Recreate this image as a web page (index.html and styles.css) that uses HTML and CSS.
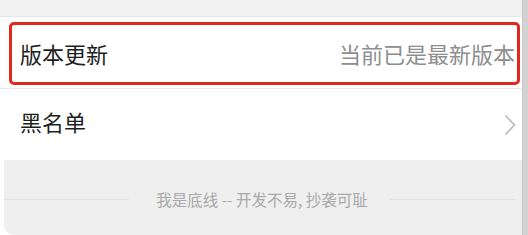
FILE: index.html
```html
<!DOCTYPE html>
<html lang="zh-CN">
<head>
<meta charset="utf-8">
<link rel="stylesheet" href="styles.css">
</head>
<body>
<div class="page">
  <div class="main">
    <div class="top-band"></div>
    <div class="row row-first">
      <div class="highlight">
        <span class="title">版本更新</span>
        <span class="value">当前已是最新版本</span>
      </div>
    </div>
    <div class="row row-second">
      <span class="title">黑名单</span>
      <svg class="chevron" width="12" height="22" viewBox="0 0 12 22"><path d="M1.5 1.5 L10.5 11 L1.5 20.5" fill="none" stroke="#b8b8b8" stroke-width="1.6"/></svg>
    </div>
    <div class="footer">
      <span class="line line-left"></span>
      <span class="footer-text">我是底线 -- 开发不易, 抄袭可耻</span>
      <span class="line line-right"></span>
    </div>
  </div>
  <div class="scrollbar"></div>
</div>
</body>
</html>
```
FILE: styles.css
```css
html, body {
  margin: 0;
  padding: 0;
  background: #ffffff;
}
body {
  font-family: "Noto Sans CJK SC", "Noto Sans", sans-serif;
  width: 528px;
  height: 235px;
  overflow: hidden;
}
.page {
  display: flex;
  width: 528px;
  height: 235px;
}
.main {
  width: 522px;
  display: flex;
  flex-direction: column;
}
.scrollbar {
  width: 6px;
  background: #d2d2d2;
  border-left: 1px solid #c8c8c8;
  box-sizing: border-box;
}
.top-band {
  height: 16px;
  background: #f1f1f1;
  border-bottom: 1px solid #e4e4e4;
}
.row {
  background: #ffffff;
  box-sizing: border-box;
}
.row-first {
  height: 72px;
  padding: 5px 2px 3px 9px;
  border-bottom: 1px solid #e8e8e8;
}
.highlight {
  height: 100%;
  box-sizing: border-box;
  border: 3px solid #e2271d;
  border-radius: 5px;
  display: flex;
  align-items: center;
  justify-content: space-between;
  padding: 0 2px 2px 8px;
}
.title {
  font-size: 22px;
  color: #1e1e1e;
  line-height: 1;
}
.value {
  font-size: 22px;
  color: #8e8e8e;
  line-height: 1;
}
.row-second {
  height: 71px;
  display: flex;
  align-items: center;
  justify-content: space-between;
  padding: 0 6px 0 20px;
}
.row-second .title {
  margin-top: -8px;
}
.chevron {
  display: block;
  margin-top: 0;
}
.footer {
  flex: 1;
  margin-left: 4px;
  background: #efefef;
  border-bottom-left-radius: 10px;
  display: flex;
  align-items: center;
  padding: 4px 7px 0 0;
}
.line {
  flex: 1;
  height: 1px;
  background: #e3e3e3;
}
.line-left {
  margin-right: 27px;
}
.line-right {
  margin-left: 22px;
}
.footer-text {
  font-size: 15.5px;
  color: #a9a9a9;
  line-height: 1;
}
```
